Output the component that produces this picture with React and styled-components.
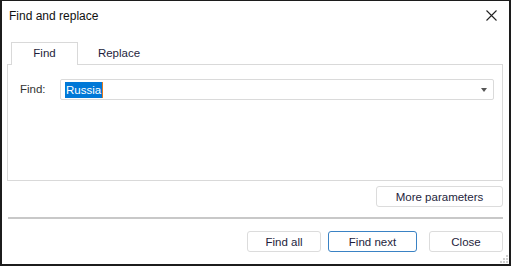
import React from 'react';
import styled, { createGlobalStyle } from 'styled-components';

const GlobalStyle = createGlobalStyle`
  html, body { margin: 0; padding: 0; background: #fff; }
  * { box-sizing: border-box; }
`;

const Window = styled.div`
  position: relative;
  width: 511px;
  height: 266px;
  background: #fff;
  border: 2px solid #1c1c1c;
  border-top-width: 1px;
  font-family: "Liberation Sans", Arial, sans-serif;
  font-size: 11px;
  color: #1e1e2e;
  display: flex;
  flex-direction: column;
`;

const TitleBar = styled.div`
  height: 29px;
  display: flex;
  align-items: center;
  justify-content: space-between;
  padding: 0 12px 0 7px;
`;

const Title = styled.span`
  font-size: 12px;
  color: #111;
`;

const Body = styled.div`
  padding: 12px 6px 0 5px;
  display: flex;
  flex-direction: column;
`;

const TabStrip = styled.div`
  display: flex;
  padding-left: 4px;
  height: 22px;
`;

const Tab = styled.div`
  width: ${p => p.$w}px;
  display: flex;
  align-items: center;
  justify-content: center;
  padding-bottom: 2px;
  background: #fff;
  border: 1px solid ${p => (p.$active ? '#d9d9d9' : 'transparent')};
  border-bottom: none;
  margin-bottom: ${p => (p.$active ? '-1px' : '0')};
  height: ${p => (p.$active ? '23px' : '22px')};
  position: relative;
  z-index: 1;
  font-size: 11.5px;
  color: #1e1e3c;
`;

const Panel = styled.div`
  height: 117px;
  border: 1px solid #d9d9d9;
  padding: 14px 8px 0 12px;
  display: flex;
  align-items: flex-start;
`;

const FieldLabel = styled.label`
  width: 40px;
  line-height: 21px;
  font-size: 11.5px;
  color: #333;
`;

const Combo = styled.div`
  flex: 1;
  height: 21px;
  border: 1px solid #dadada;
  border-radius: 2px;
  display: flex;
  align-items: center;
  padding: 0 6px 0 4px;
`;

const Selected = styled.span`
  background: #0078d7;
  color: #fff;
  font-size: 11.5px;
  line-height: 16px;
  padding: 0 1px;
  border-right: 1px solid #e07a20;
`;

const Arrow = styled.span`
  margin-left: auto;
  width: 0;
  height: 0;
  border-left: 3.5px solid transparent;
  border-right: 3.5px solid transparent;
  border-top: 4px solid #555;
`;

const Row = styled.div`
  display: flex;
  justify-content: flex-end;
  margin-top: ${p => p.$mt}px;
`;

const Button = styled.button`
  height: 21px;
  width: ${p => p.$w}px;
  margin-left: ${p => p.$ml || 0}px;
  background: #fff;
  border: 1px solid ${p => (p.$primary ? '#3a82c4' : '#dcdcdc')};
  border-radius: 3px;
  font-family: "Liberation Sans", Arial, sans-serif;
  font-size: 11.5px;
  color: #1e1e3c;
  padding: 0;
`;

const Separator = styled.hr`
  margin: 10px 0 0 1px;
  border: none;
  border-top: 2px solid #c8c8c8;
  height: 0;
`;

const Grip = styled.svg`
  position: absolute;
  right: 1px;
  bottom: 1px;
`;

export default function App() {
  return (
    <>
      <GlobalStyle />
      <Window>
        <TitleBar>
          <Title>Find and replace</Title>
          <svg width="11" height="11" viewBox="0 0 11 11">
            <path d="M0.5 0.5L10.5 10.5M10.5 0.5L0.5 10.5" stroke="#222" strokeWidth="1.1" />
          </svg>
        </TitleBar>
        <Body>
          <TabStrip>
            <Tab $active $w={67}>Find</Tab>
            <Tab $w={82}>Replace</Tab>
          </TabStrip>
          <Panel>
            <FieldLabel>Find:</FieldLabel>
            <Combo>
              <Selected>Russia</Selected>
              <Arrow />
            </Combo>
          </Panel>
          <Row $mt={5}>
            <Button $w={127}>More parameters</Button>
          </Row>
          <Separator />
          <Row $mt={12}>
            <Button $w={74}>Find all</Button>
            <Button $w={89} $ml={7} $primary>Find next</Button>
            <Button $w={74} $ml={12}>Close</Button>
          </Row>
        </Body>
        <Grip width="9" height="9" viewBox="0 0 9 9">
          {[[7, 1], [4, 4], [7, 4], [1, 7], [4, 7], [7, 7]].map(([x, y]) => (
            <rect key={`${x}-${y}`} x={x} y={y} width="2" height="2" fill="#d0d0d0" />
          ))}
        </Grip>
      </Window>
    </>
  );
}
